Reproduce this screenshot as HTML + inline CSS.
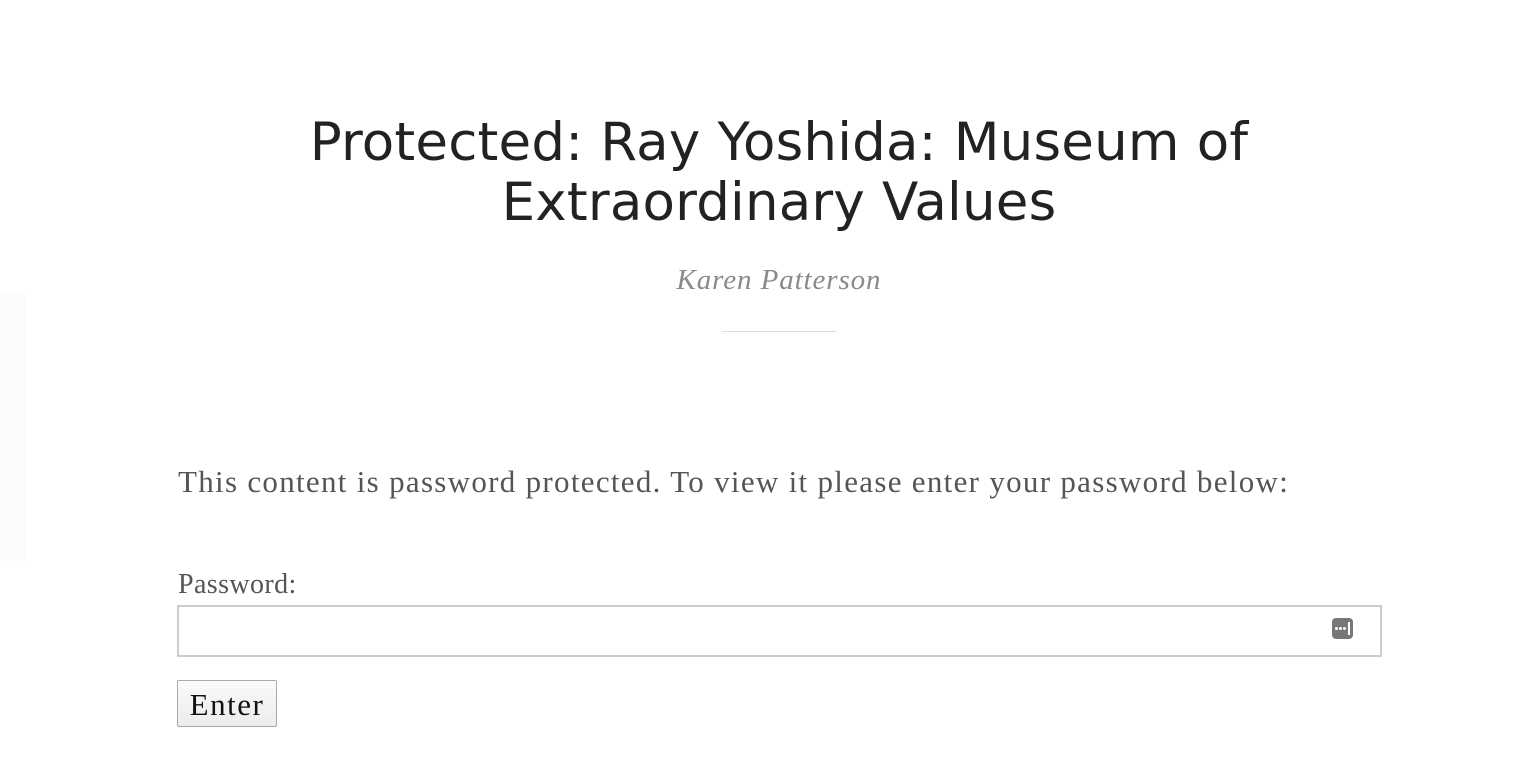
<!DOCTYPE html>
<html><head><meta charset="utf-8"><style>
body{margin:0;background:#fff;width:1525px;height:774px;position:relative;overflow:hidden}
.side{position:absolute;left:0;top:291px;width:26px;height:270px;background:#fcfcfc}
h1{position:absolute;left:0;width:1558px;top:113px;margin:0;text-align:center;font:normal 53px/60px "DejaVu Sans",sans-serif;color:#222;letter-spacing:0.2px}
.auth{position:absolute;left:0;width:1558px;top:264px;text-align:center;font:italic 29px "Liberation Serif",serif;color:#8a8a8a;letter-spacing:0.9px}
.rule{position:absolute;left:722px;top:331px;width:114px;height:1px;background:#ddd}
.p{position:absolute;left:178px;top:464px;font:31px "Liberation Serif",serif;color:#555;white-space:nowrap;letter-spacing:1.3px}
.lab{position:absolute;left:178px;top:569px;font:28px "Liberation Serif",serif;color:#555;letter-spacing:0.4px}
.inp{position:absolute;left:177px;top:605px;width:1201px;height:48px;border:2px solid #ccc;background:#fff}
.ic{position:absolute;left:1332px;top:618px;width:21px;height:21px;border-radius:4px;background:#777}
.ic i{position:absolute;top:9px;width:3px;height:3px;background:#fff;border-radius:50%}
.ic b{position:absolute;left:16px;top:4px;width:2px;height:13px;background:#fff}
.btn{position:absolute;left:177px;top:680px;width:100px;height:47px;border:1px solid #aaa;background:linear-gradient(#fafafa,#ececec);font:31px "Liberation Serif",serif;color:#111;text-align:center;line-height:47px;box-sizing:border-box;border-radius:2px;letter-spacing:1.5px}
</style></head><body>
<div class="side"></div>
<h1>Protected: Ray Yoshida: Museum of<br>Extraordinary Values</h1>
<div class="auth">Karen Patterson</div>
<div class="rule"></div>
<div class="p">This content is password protected. To view it please enter your password below:</div>
<div class="lab">Password:</div>
<div class="inp"></div>
<div class="ic"><i style="left:3px"></i><i style="left:7px"></i><i style="left:11px"></i><b></b></div>
<div class="btn">Enter</div>
</body></html>
